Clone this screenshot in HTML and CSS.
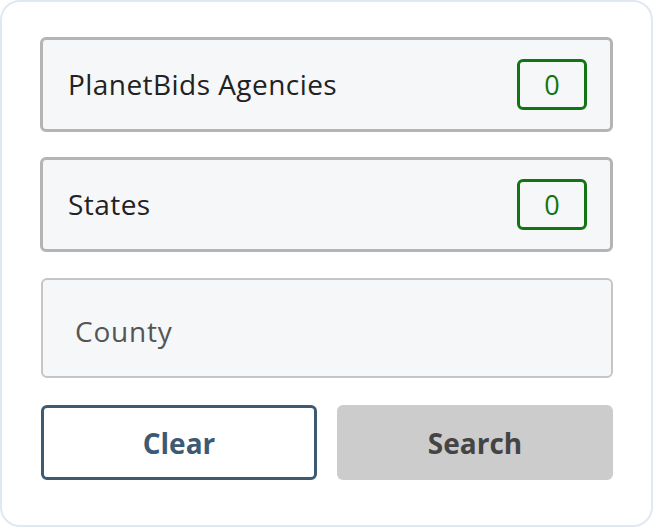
FILE: index.html
```html
<!DOCTYPE html>
<html>
<head>
<meta charset="utf-8">
<link rel="stylesheet" href="styles.css">
</head>
<body>
<div class="card">
  <div class="picker">
    <span class="picker-label">PlanetBids Agencies</span>
    <span class="badge">0</span>
  </div>
  <div class="picker">
    <span class="picker-label">States</span>
    <span class="badge">0</span>
  </div>
  <div class="field">
    <span class="field-label">County</span>
  </div>
  <div class="actions">
    <button class="btn btn-clear">Clear</button>
    <button class="btn btn-search">Search</button>
  </div>
</div>
</body>
</html>
```
FILE: styles.css
```css
html, body {
  margin: 0;
  padding: 0;
  background: #ffffff;
}
.card {
  box-sizing: border-box;
  width: 653px;
  height: 527px;
  border: 2px solid #e1e8ef;
  border-radius: 20px;
  padding: 35px 38px 0 38px;
  display: flex;
  flex-direction: column;
  font-family: "Open Sans", "Noto Sans", sans-serif;
}
.picker {
  box-sizing: border-box;
  height: 95px;
  width: 573px;
  border: 3px solid #b4b4b4;
  border-radius: 6px;
  background: #f6f7f9;
  display: flex;
  align-items: center;
  justify-content: space-between;
  padding: 0 23px 0 25px;
  margin-bottom: 25px;
}
.picker-label {
  font-size: 28px;
  letter-spacing: 0.45px;
  color: #222222;
  margin-top: -2px;
}
.badge {
  box-sizing: border-box;
  width: 70px;
  height: 51px;
  border: 3px solid #137413;
  border-radius: 6px;
  color: #137413;
  font-size: 27px;
  display: flex;
  align-items: center;
  justify-content: center;
}
.field {
  box-sizing: border-box;
  height: 100px;
  width: 572px;
  margin-left: 1px;
  border: 2px solid #c6c6c6;
  border-radius: 6px;
  background: #f6f7f9;
  display: flex;
  align-items: center;
  padding-left: 32px;
  margin-top: 1px;
  margin-bottom: 27px;
}
.field-label {
  font-size: 28px;
  letter-spacing: 0.8px;
  color: #555555;
  margin-top: 6px;
}
.actions {
  display: flex;
  gap: 20px;
  margin-left: 1px;
}
.btn {
  box-sizing: border-box;
  width: 276px;
  height: 75px;
  border-radius: 6px;
  font-family: "Open Sans", "Noto Sans", sans-serif;
  font-size: 28px;
  font-weight: 700;
  padding: 0;
}
.btn-clear {
  background: #ffffff;
  border: 3px solid #3d5a73;
  color: #3d5a73;
}
.btn-search {
  background: #cccccc;
  border: none;
  color: #444444;
}
```
